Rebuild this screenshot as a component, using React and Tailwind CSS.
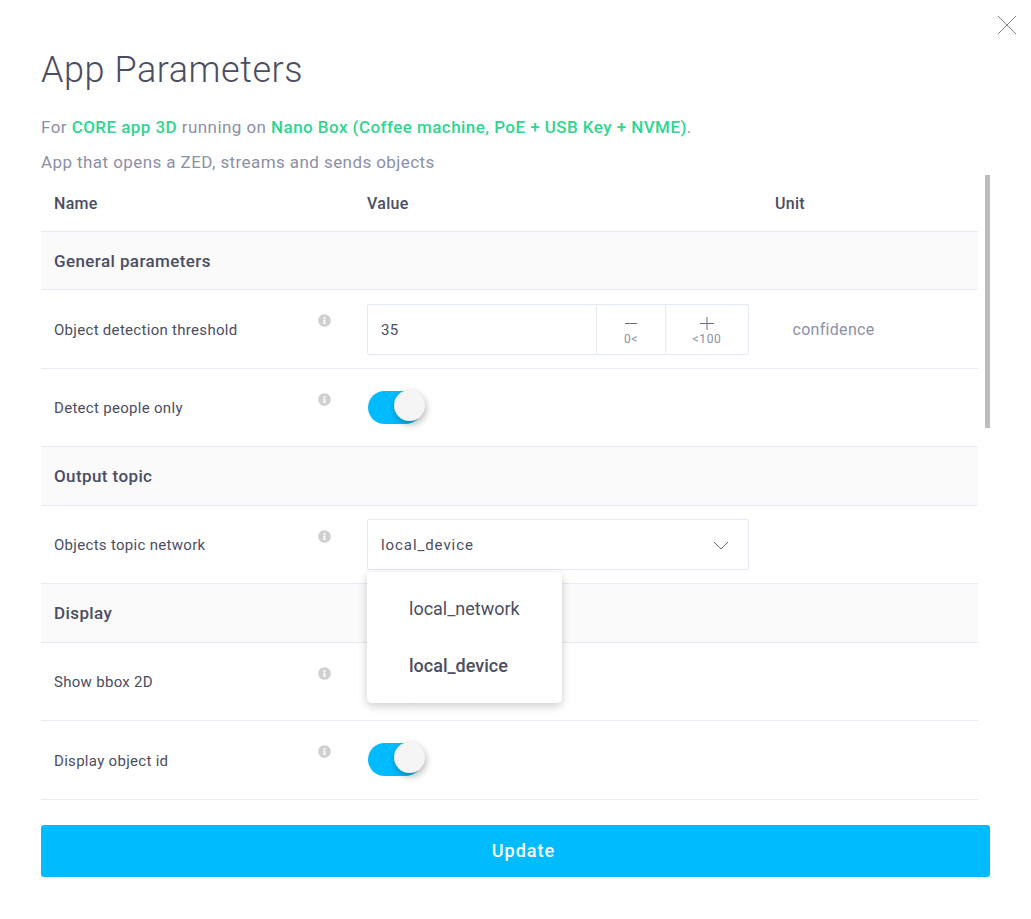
import React from 'react';
import { FaInfoCircle } from 'react-icons/fa';

const INK = 'text-[#4b4d62]';

const Toggle = () => (
  <div className="relative self-start w-[58px] h-[34px] mt-[21px]">
    <div className="absolute left-[1px] top-[1px] w-[54px] h-[33px] rounded-full bg-[#00bcff]" />
    <div className="absolute left-[27px] top-0 w-[31px] h-[31px] rounded-full bg-[#f5f5f5] shadow-[1px_3px_7px_rgba(0,0,0,0.3)]" />
  </div>
);

const Section = ({ title, h }) => (
  <div className={`flex items-center pl-[13px] pt-[2px] bg-[#fafafa] border-b border-[#e6ebf3] ${h}`}>
    <span className={`font-medium text-[17px] tracking-[0.4px] ${INK}`}>{title}</span>
  </div>
);

const Row = ({ label, h, children }) => (
  <div className={`relative flex items-center border-b border-[#e6ebf3] ${h}`}>
    <div className={`w-[326px] pl-[13px] pt-[2px] text-[15px] tracking-[0.3px] ${INK}`}>{label}</div>
    <FaInfoCircle size={13} className="absolute left-[276.5px] top-[24px] text-[#d0d0d0]" />
    {children}
  </div>
);

const Stepper = () => (
  <div className="flex w-[382px] h-[51px] border border-[#e4eaf4] rounded-[2px]">
    <div className={`flex-1 flex items-center pl-[13px] pt-[2px] text-[15px] tracking-[0.4px] ${INK}`}>35</div>
    <div className="w-[69px] border-l border-[#e4eaf4] flex flex-col items-center pt-[11px]">
      <svg width="14" height="14" viewBox="0 0 14 14" stroke="#6a6c80" strokeWidth="1"><path d="M1 7.5h12" /></svg>
      <span className="mt-[3px] text-[12px] leading-[13px] tracking-[0.5px] text-[#8c8fa8]">0&lt;</span>
    </div>
    <div className="w-[83px] border-l border-[#e4eaf4] flex flex-col items-center pt-[11px]">
      <svg width="14" height="14" viewBox="0 0 14 14" stroke="#6a6c80" strokeWidth="1"><path d="M0 7.5h14M7 1v13" /></svg>
      <span className="mt-[3px] text-[12px] leading-[13px] tracking-[0.7px] text-[#8c8fa8]">&lt;100</span>
    </div>
  </div>
);

const Select = () => (
  <div className="relative w-[382px] h-[51px] pt-[2px] border border-[#e4eaf4] rounded-[2px] flex items-center justify-between pl-[13px] pr-[19px]">
    <span className={`text-[15px] tracking-[0.93px] ${INK}`}>local_device</span>
    <svg width="16" height="9" viewBox="0 0 16 9" fill="none" stroke="#6a6c80" strokeWidth="1"><path d="M1 1l7 7 7-7" /></svg>
    <div className="absolute z-10 left-[-1px] top-[52px] w-[195px] h-[131px] bg-white rounded-[5px] shadow-[0_3px_10px_rgba(0,0,0,0.2)] pl-[42px] pt-[23px] text-[18px]">
      <div className={`leading-[27px] ${INK}`}>local_network</div>
      <div className={`mt-[30px] leading-[27px] font-medium ${INK}`}>local_device</div>
    </div>
  </div>
);

export default function App() {
  return (
    <div className="relative w-[1031px] h-[919px] bg-white overflow-hidden antialiased font-['Roboto',sans-serif] pl-[41px] pt-[47px]">
      <svg className="absolute left-[997px] top-[15px]" width="20" height="20" viewBox="0 0 20 20" stroke="#858585" strokeWidth="1"><path d="M1 1l18 18M19 1L1 19" /></svg>

      <h1 className={`text-[36px] font-light leading-[46px] tracking-[0.55px] ${INK}`}>App Parameters</h1>

      <p className="mt-[22px] text-[17px] leading-[24px] tracking-[0.44px] text-[#8c8fa8]">
        For <span className="font-medium text-[#2ed68f]">CORE app 3D</span> running on{' '}
        <span className="font-medium text-[#2ed68f]">Nano Box (Coffee machine, PoE + USB Key + NVME)</span>.
      </p>
      <p className="mt-[11px] text-[17px] leading-[24px] tracking-[0.42px] text-[#8c8fa8]">App that opens a ZED, streams and sends objects</p>

      <div className="w-[937px] mt-[1px]">
        <div className={`flex items-center h-[57px] border-b border-[#e6e8f2] pt-[2px] text-[16px] font-medium tracking-[0.3px] ${INK}`}>
          <div className="w-[326px] pl-[13px]">Name</div>
          <div className="w-[408px]">Value</div>
          <div>Unit</div>
        </div>
        <Section title="General parameters" h="h-[58px]" />
        <Row label="Object detection threshold" h="h-[79px]">
          <Stepper />
          <span className="ml-[43.5px] pt-[2px] text-[16px] tracking-[0.3px] text-[#8c8fa8]">confidence</span>
        </Row>
        <Row label="Detect people only" h="h-[78px]"><Toggle /></Row>
        <Section title="Output topic" h="h-[59px]" />
        <Row label="Objects topic network" h="h-[78px]"><Select /></Row>
        <Section title="Display" h="h-[59px]" />
        <Row label="Show bbox 2D" h="h-[78px]"><Toggle /></Row>
        <Row label="Display object id" h="h-[79px]"><Toggle /></Row>
      </div>

      <div className="absolute left-[985px] top-[175px] w-[5px] h-[253px] bg-[#bdbdbd]" />

      <button className="mt-[25px] w-[949px] h-[52px] rounded-[3px] bg-[#00bcff] pl-[16px] pb-[2px] text-white text-[18px] font-medium tracking-[1px]">Update</button>
    </div>
  );
}
